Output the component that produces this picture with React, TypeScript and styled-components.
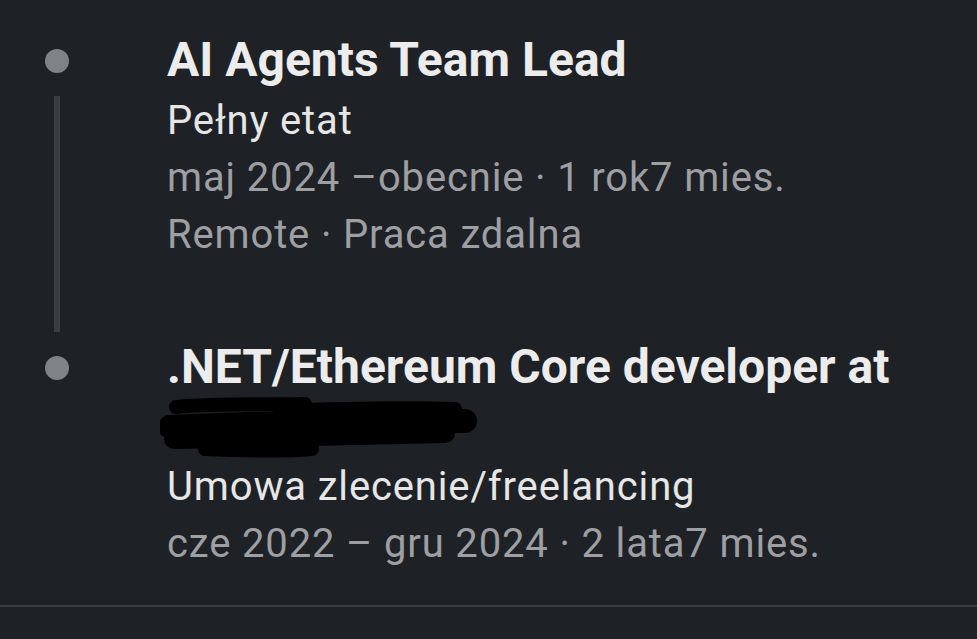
import React from "react";
import styled, { createGlobalStyle } from "styled-components";

const GlobalStyle = createGlobalStyle`
  html, body {
    margin: 0;
    padding: 0;
    background: #1e2125;
  }
  body {
    font-family: Roboto, "Noto Sans", "Liberation Sans", sans-serif;
    -webkit-font-smoothing: antialiased;
  }
`;

const Page = styled.div`
  width: 977px;
  height: 639px;
  background: #1e2125;
  overflow: hidden;
  display: flex;
  flex-direction: column;
`;

const Timeline = styled.div`
  display: flex;
  flex-direction: column;
  padding-top: 29px;
`;

const Item = styled.div<{ $padBottom: number }>`
  display: grid;
  grid-template-columns: 114px 1fr;
  column-gap: 53px;
  padding-bottom: ${(p) => p.$padBottom}px;
`;

const Rail = styled.div`
  display: flex;
  flex-direction: column;
  align-items: center;
`;

const Dot = styled.div`
  width: 24px;
  height: 24px;
  border-radius: 50%;
  background: #7f8286;
  margin-top: 20px;
  flex: none;
`;

const Connector = styled.div`
  width: 6px;
  flex: 1;
  background: #3a3d41;
  margin-top: 23px;
  margin-bottom: -69px;
`;

const Content = styled.div`
  display: flex;
  flex-direction: column;
`;

const Title = styled.div`
  font-size: 48px;
  line-height: 61px;
  font-weight: 700;
  color: #ececec;
  white-space: nowrap;
  margin-bottom: 2px;
`;

const Redacted = styled.div`
  height: 61px;
  display: flex;
  align-items: flex-start;
  margin-left: -7px;
  margin-top: -2px;
`;

const Primary = styled.div`
  font-size: 40px;
  line-height: 57px;
  font-weight: 400;
  letter-spacing: 0.85px;
  color: #e6e6e6;
  white-space: nowrap;
`;

const Meta = styled(Primary)`
  color: #9d9fa2;
`;

const Divider = styled.div`
  height: 2px;
  background: #393c40;
  margin-top: 33px;
`;

const Scribble = () => (
  <svg width="320" height="66" viewBox="0 0 320 66" aria-hidden="true">
    <g stroke="#000" strokeLinecap="round" fill="none">
      <path d="M16 10 C 60 6, 110 8, 145 7" strokeWidth="14" />
      <path d="M120 14 C 170 12, 230 10, 295 12" strokeWidth="14" />
      <path d="M10 30 C 100 26, 220 24, 305 24" strokeWidth="24" />
      <path d="M14 42 C 120 40, 220 38, 285 36" strokeWidth="20" />
      <path d="M45 52 C 90 54, 130 54, 152 52" strokeWidth="14" />
    </g>
  </svg>
);

export default function App() {
  return (
    <Page>
      <GlobalStyle />
      <Timeline>
        <Item $padBottom={73}>
          <Rail>
            <Dot />
            <Connector />
          </Rail>
          <Content>
            <Title>AI Agents Team Lead</Title>
            <Primary>Pełny etat</Primary>
            <Meta>maj 2024 –obecnie · 1 rok7 mies.</Meta>
            <Meta>Remote · Praca zdalna</Meta>
          </Content>
        </Item>
        <Item $padBottom={0}>
          <Rail>
            <Dot />
          </Rail>
          <Content>
            <Title>.NET/Ethereum Core developer at</Title>
            <Redacted>
              <Scribble />
            </Redacted>
            <Primary>Umowa zlecenie/freelancing</Primary>
            <Meta>cze 2022 – gru 2024 · 2 lata7 mies.</Meta>
          </Content>
        </Item>
      </Timeline>
      <Divider />
    </Page>
  );
}
